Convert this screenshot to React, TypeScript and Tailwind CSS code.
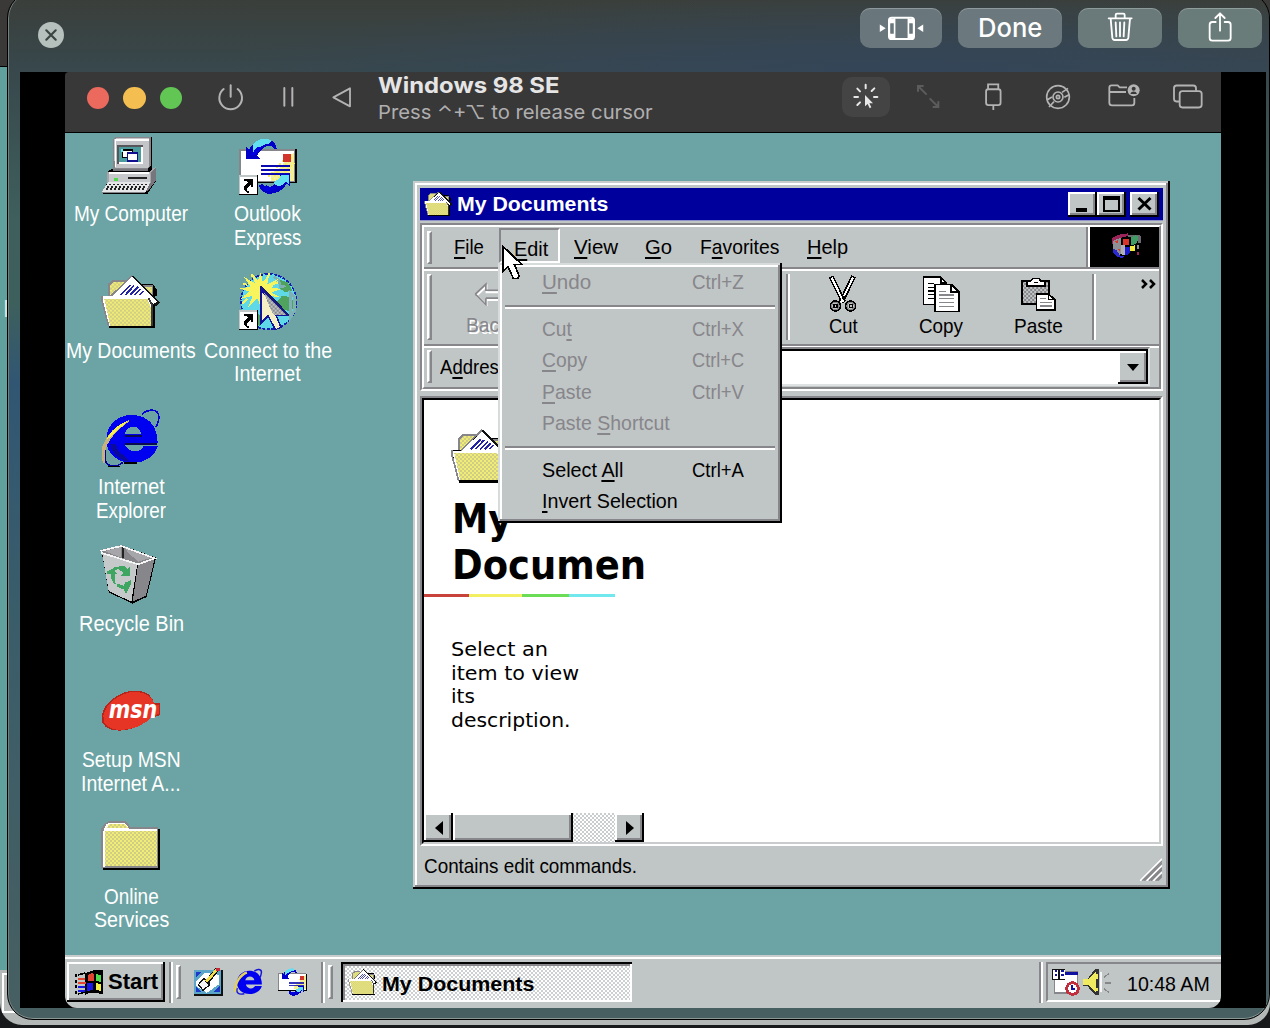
import { ReactNode, useLayoutEffect, useRef, useState } from "react";

/* A run of text condensed or stretched horizontally to a given width. */
function Fit({ w, children }: { w: number; children: ReactNode }) {
  const ref = useRef<HTMLSpanElement>(null);
  const [scale, setScale] = useState(1);
  useLayoutEffect(() => {
    if (ref.current) setScale(w / ref.current.offsetWidth);
  }, [w]);
  return (
    <span className="inline-block text-left" style={{ width: w }}>
      <span ref={ref} className="inline-block origin-left whitespace-nowrap" style={{ transform: `scaleX(${scale})` }}>
        {children}
      </span>
    </span>
  );
}

function U({ children }: { children: ReactNode }) {
  return <span className="underline decoration-2 underline-offset-[3px] [text-decoration-skip-ink:none]">{children}</span>;
}

function Art({ box, className, children }: { box: string; className?: string; children: ReactNode }) {
  return (
    <svg viewBox={box} className={className} shapeRendering="crispEdges" fill="none">
      {children}
    </svg>
  );
}

function Patterns() {
  return (
    <svg className="absolute h-0 w-0">
      <defs>
        <pattern id="yellow" width="12" height="12" patternUnits="userSpaceOnUse">
          <rect width="12" height="12" fill="#f0ec74" />
          <rect width="6" height="6" fill="#cfcd86" />
          <rect x="6" y="6" width="6" height="6" fill="#cfcd86" />
        </pattern>
        <pattern id="grey" width="12" height="12" patternUnits="userSpaceOnUse">
          <rect width="12" height="12" fill="#c0c5c5" />
          <rect width="6" height="6" fill="#87868b" />
          <rect x="6" y="6" width="6" height="6" fill="#87868b" />
        </pattern>
      </defs>
    </svg>
  );
}

/* ---------- desktop icons ---------- */

const ComputerIcon = () => (
  <Art box="120 17 186 186" className="h-[62px] w-[62px]">
    <path d="M158 28l8-8h108l3 6v90l12-8v42l-26 40H130v-6l12-28v-32l18-10z" fill="#000" />
    <path d="M158 28l8-8h106v88l-8 8H158z" fill="#87868b" />
    <path d="M162 28l6-4h98v84l-4 5h-98z" fill="#c4c5c9" />
    <path d="M164 26h102v5h-97v80h-5z" fill="#fff" />
    <path d="M172 43h77v58h-77z" fill="#57565b" />
    <path d="M178 49h70v51h-70z" fill="#fff" />
    <path d="M178 49h65v46h-65z" fill="#4c9c9d" />
    <path d="M186 56h34v26h-34z" fill="#000" /><path d="M190 61h26v18h-26z" fill="#fff" />
    <path d="M200 66h34v28h-34z" fill="#10108e" /><path d="M204 72h26v18h-26z" fill="#fff" />
    <path d="M182 56h6v10h-6z" fill="#61e6ed" />
    <path d="M142 126h124l22-18v40l-18 12H142z" fill="#a5a5aa" />
    <path d="M146 126h124v34H146z" fill="#c8c9cc" />
    <path d="M148 125h120v5H148z" fill="#fff" />
    <path d="M160 117h104v6h-104z" fill="#77767c" />
    <path d="M204 140h56v6h-56z" fill="#222" /><path d="M162 142h12v10h-12z" fill="#4fdc4b" />
    <path d="M272 126l16-14v38l-26 34-6-4 16-24z" fill="#77767c" />
    <path d="M144 156h126l-14 30H125z" fill="#e6e6e8" />
    <path d="M146 162h116M141 169h116M137 176h114" stroke="#222" strokeWidth="5" strokeDasharray="6 6" />
    <path d="M126 184h130v5H126z" fill="#87868b" />
  </Art>
);

const Shortcut = ({ y }: { y: number }) => (
  <g transform={`translate(534 ${y})`}>
    <path d="M0 0h59v59H0z" fill="#000" /><path d="M0 0h56v56H0z" fill="#c0c5c5" /><path d="M4 5h50v50H4z" fill="#fff" />
    <path d="M16 10h27v26h-7v-7l-10 9v8h6v6h-8l-8-8V34l12-14-12-4z" fill="#000" />
  </g>
);

const Envelope = () => (
  <>
    <path d="M536 56h172v102H536" fill="#000" />
    <path d="M534 54h170v100H534z" fill="#87868b" />
    <path d="M540 60h160v92H540z" fill="#fff" />
    <path d="M630 150v-20l30-20 20-30 20-14v84z" fill="#f4ee9b" />
    <path d="M632 146l66-70M646 150l54-54M624 138l50-56" stroke="#f7f05a" strokeWidth="6" strokeDasharray="6 6" />
    <path d="M668 70h24v24h-24z" fill="#d3342c" />
    <path d="M600 106h88M600 117h88M600 129h88" stroke="#0a0ab0" strokeWidth="5" />
    <path d="M555 46l11 10c8-18 26-32 54-30 18 2 26 14 28 28h-8c-6-10-16-12-26-6-14 8-20 18-24 26l10 12h-45z" fill="#0000c8" />
    <path d="M578 42c8-12 22-20 44-18l10 6-6 8c-20 2-30 14-36 26h-14z" fill="#62dff0" />
    <path d="M592 48l-22 24h14l20-22z" fill="#0000e0" />
    <path d="M654 130h34v36l-10-8c-8 18-28 32-54 32-14-2-24-12-30-24l10-6c10 10 20 12 32 6l24-26z" fill="#0000c8" />
    <path d="M660 134h24v26l-8-6-18 14-14-6-6-6 20-14z" fill="#62dff0" />
    <path d="M604 172l14 10 20-4 10-10-16 2-14-6z" fill="#0000e0" />
  </>
);

const OutlookIcon = () => (
  <Art box="529 16 186 186" className="h-[62px] w-[62px]">
    <Envelope />
    <Shortcut y={134} />
  </Art>
);

const OpenFolder = () => (
  <>
    <path d="M150 498v-34l16-14h30l12 12h70l12 18v20h-6v96H148v-6l-22-84v-8z" fill="#000" />
    <path d="M145 498v-36l14-12h36l16 16h68v34z" fill="#87868b" />
    <path d="M150 498v-32l12-10h30l14 16h70v28z" fill="url(#yellow)" />
    <path d="M152 500l64-62 6 2 78 78-12 12-14-10z" fill="#111" />
    <path d="M156 500l60-58 74 74-10 8-14-20z" fill="#fff" />
    <path d="M152 500l64-62" stroke="#87868b" strokeWidth="5" />
    <path d="M182 496l30-30M196 496l26-28M210 496l24-24M224 496l18-18M238 496l12-12" stroke="#2424a4" strokeWidth="5" />
    <path d="M126 500h138l12 14v70l6 6H146z" fill="#fff" />
    <path d="M133 508h129l10 24 4 58H151z" fill="url(#yellow)" />
    <path d="M126 498v16l20 76" stroke="#87868b" strokeWidth="5" />
    <path d="M266 506l10 20v62" stroke="#3a3a3a" strokeWidth="5" />
    <path d="M146 592h140" stroke="#000" strokeWidth="6" />
  </>
);

const DocumentsIcon = () => (
  <Art box="120 427 186 186" className="h-[62px] w-[62px]">
    <OpenFolder />
  </Art>
);

const ConnectIcon = () => (
  <Art box="529 427 186 186" className="h-[62px] w-[62px]">
    <circle cx="624" cy="516" r="83" fill="#5fd9e8" stroke="#1420b4" strokeWidth="5" strokeDasharray="10 4" />
    <path d="M655 450l26 8 14 24-20 6-16-10zM664 498l26 4 14 26-16 18-26-10-12-20zM572 556l18-8 14 20-8 22z" fill="#4fa35e" />
    <path d="M690 490l12 12v40l-12 20zM640 440l14 12 6 20 14-4" stroke="#7fb0b3" strokeWidth="8" />
    <path d="M600 428l6 28 20-22-6 30 32-16-18 26 28 4-30 10 28 16-34-6 8 24-26-18-6 34-12-32-28 28 14-36-36 10 26-22-30-10 34-4-20-30 32 18-8-30 18 24z" fill="#f8f45d" />
    <path d="M572 432l4 10M626 430l-4 12M548 462l12 4M552 500l12-6M545 522l14-14M652 458l-14 6" stroke="#f8f45d" strokeWidth="6" />
    <path d="M598 470v118l24-26 20 40 22-8-14-34h38z" fill="#14149a" />
    <path d="M604 490v84l18-20 24 44 12-6-18-44h26z" fill="#f4efc4" />
    <path d="M610 490l66 66h-36l-8-12z" fill="url(#grey)" />
    <path d="M600 470l86 88" stroke="#191970" strokeWidth="5" />
    <Shortcut y={542} />
  </Art>
);

const IeIcon = () => (
  <Art box="120 56 186 186" className="h-[62px] w-[62px]">
    <path d="M246 72c20-18 48-16 50 4 2 14-4 26-8 34" stroke="#0000d4" strokeWidth="5" />
    <path d="M136 180c-4 24 0 44 20 48 16 0 24-4 32-12" stroke="#0000a0" strokeWidth="5" />
    <path d="M144 226h36v5h-36z" fill="#000" />
    <path d="M215 74c50 0 78 34 78 84H194c2 24 44 36 56 10h43c-8 32-42 50-76 50-44 0-78-28-78-70 0-44 34-74 76-74zM194 132h50c-4-32-46-30-50 0z" fill="#0000f0" fillRule="evenodd" />
    <path d="M194 136h52M194 160h98" stroke="#0b0b52" strokeWidth="5" />
    <path d="M150 160c2 26 26 50 60 56l-18-22c-14-4-22-20-24-34z" fill="#0a0a9c" />
    <path d="M192 218h40" stroke="#000" strokeWidth="5" />
    <path d="M206 90c-40 14-66 44-78 76-6 22-4 38 2 52l6-2c-4-24 0-46 12-64 14-22 36-42 58-58z" fill="#c6b27a" />
    <path d="M206 90c-24 8-52 28-66 56l10-4c14-20 36-32 56-52z" fill="#f6ef4e" />
  </Art>
);

const RecycleIcon = () => (
  <Art box="120 466 186 186" className="h-[62px] w-[62px]">
    <path d="M124 480l60-14 104 38-28 118-42 20-72-34z" fill="#000" />
    <path d="M124 480l60-14 102 38-50 20-108-34z" fill="#87868b" />
    <path d="M134 484l50-12v32z" fill="#a5a5aa" /><path d="M194 474l80 30-40 12-30-28z" fill="#a5a5aa" />
    <path d="M188 470v34" stroke="#222" strokeWidth="5" />
    <path d="M126 488l106 36-18 112-68-32z" fill="#c5c9ca" />
    <path d="M234 524l50-18-26 112-40 18z" fill="#87868b" />
    <path d="M124 483l60-14 100 37-50 18-108-34z" stroke="#f5f5f5" strokeWidth="5" />
    <path d="M158 534l34-6 10 10 8-6v26h-28l8-8-14-12-14 4zM140 546l20-10 12 18h-8l2 24 4 8c-12-6-18-16-18-32h-12zM212 572v14l-14 26-6-12-20-8-2-10 22 6 4-10z" fill="#3fa662" />
  </Art>
);

const MsnIcon = () => (
  <Art box="120 36 186 186" className="h-[62px] w-[62px]">
    <path d="M290 110c-12 36-62 72-112 72-36 0-56-16-53-44 4-40 56-76 98-76 38 0 52 14 60 38h16v36l-14 4z" fill="#b5251c" />
    <path d="M284 104h12v28l-20 8c-20 24-58 40-94 40-34 0-54-14-52-42 6-38 54-72 92-72 32 0 54 10 62 38z" fill="#e73525" />
    <text x="146" y="145" fontFamily="DejaVu Sans" fontSize="74" fontWeight="bold" fontStyle="italic" fill="#fff" textLength="146" lengthAdjust="spacingAndGlyphs">msn</text>
  </Art>
);

const FolderIcon = () => (
  <Art box="120 444 186 186" className="h-[62px] w-[62px]">
    <path d="M129 478h170v121H129z" fill="#000" />
    <path d="M124 474l12-14 10-7h52l14 19h82v122H124z" fill="#87868b" />
    <path d="M132 476l8-14 10-4h44l14 18h84v8H132z" fill="#fff" />
    <path d="M140 474l8-12h46l10 12zM136 484h154v104H136z" fill="url(#yellow)" />
    <path d="M132 484v106" stroke="#fff" strokeWidth="6" />
  </Art>
);

type Line = [string, number];

function DesktopIcon({ icon, lines }: { icon: ReactNode; lines: Line[] }) {
  return (
    <div className="flex flex-col items-center text-[22px] leading-[23.5px] text-white">
      <div className="h-[66.5px]">{icon}</div>
      {lines.map(([t, w]) => (
        <div key={t} className="h-[23.5px]"><Fit w={w}>{t}</Fit></div>
      ))}
    </div>
  );
}

/* ---------- window ---------- */

const raised = "bg-[#c0c5c5] shadow-[inset_-2px_-2px_0_#000,inset_2px_2px_0_#fff,inset_-4px_-4px_0_#87868b]";

function Grip({ className }: { className: string }) {
  return <div className={`w-[5px] shrink-0 border-2 border-l-white border-t-white border-r-[#87868b] border-b-[#87868b] ${className}`} />;
}

function Groove({ className }: { className: string }) {
  return <div className={`w-[4px] shrink-0 border-l-2 border-r-2 border-l-[#87868b] border-r-white ${className}`} />;
}

function TitleBar() {
  return (
    <div className="flex h-[33px] items-center bg-[#00009c] pl-[4px] pr-[4px] shadow-[inset_0_-1px_0_#8f92c8]">
      <Art box="120 431 186 186" className="h-[30px] w-[29px]"><OpenFolder /></Art>
      <div className="ml-[4px] h-[34px] text-[21px] leading-[32px] font-bold text-white"><Fit w={151}>My Documents</Fit></div>
      <div className="ml-auto flex items-start">
        <div className={`h-[25px] w-[29px] ${raised}`}><div className="ml-[8px] mt-[16px] h-[4px] w-[11px] bg-black" /></div>
        <div className={`h-[25px] w-[29px] ${raised}`}><div className="ml-[6px] mt-[4px] h-[16px] w-[17px] border-2 border-t-4 border-black" /></div>
        <div className={`ml-[4px] h-[25px] w-[29px] ${raised}`}>
          <svg viewBox="0 0 29 25" className="h-[25px] w-[29px]" fill="none"><path d="M8.500 6l12 11.500M20.500 6l-12 11.500" stroke="#000" strokeWidth="3" /></svg>
        </div>
      </div>
    </div>
  );
}

const FlagLogo = () => (
  <svg viewBox="995 175 90 75" className="h-[25px] w-[30px]" shapeRendering="crispEdges">
    <path d="M998 190l20-10 28-4v8l-22 6-18 22-8-4z" fill="#9c2358" />
    <path d="M1002 198l24-10v50l-14 6-10-18z" fill="#8f8f96" /><path d="M1006 200l12-4-4 10zM1014 222h8v8z" fill="#d93a30" />
    <path d="M1000 222l12 4 10 18 14 2-6 4-18-4-12-12z" fill="#2a2ad0" />
    <path d="M1044 180l34 0 6 6v18l-6 4-4-20-26 0z" fill="#6a6a70" />
    <path d="M1030 192h20v20h-20z" fill="#d8362c" /><path d="M1056 188l12-6 8 4v12l-8 10-14 4z" fill="#3f9a63" />
    <path d="M1036 216h16v18l-10 8-8-4z" fill="#1a1ad0" /><path d="M1052 214l16-2v18h-16z" fill="#f2ea3c" />
    <path d="M1024 212h14v30h-8l-6-8z" fill="#b0b0b6" /><path d="M1072 212h6v12h-6z" fill="#8f8f96" /><path d="M1072 232h6v10h-6z" fill="#9c2358" />
  </svg>
);

function MenuBar() {
  return (
    <div className="flex h-[40px] items-start text-[21px] leading-[39px]">
      <Grip className="ml-[3px] mt-[4px] h-[33px]" />
      <div className="ml-[22px]"><Fit w={30}><U>F</U>ile</Fit></div>
      <div className="ml-[15px] mt-[1px] h-[35px] w-[61px] border-2 border-l-[#87868b] border-t-[#87868b] border-r-white border-b-white pl-[13px] leading-[37px]"><Fit w={34}><U>E</U>dit</Fit></div>
      <div className="ml-[14px]"><Fit w={44}><U>V</U>iew</Fit></div>
      <div className="ml-[27px]"><Fit w={27}><U>G</U>o</Fit></div>
      <div className="ml-[28px]"><Fit w={79}>F<U>a</U>vorites</Fit></div>
      <div className="ml-[28px]"><Fit w={41}><U>H</U>elp</Fit></div>
      <div className="ml-auto h-[40px] border-l-2 border-[#87868b]">
        <div className="h-[40px] border-l-2 border-white">
          <div className="flex h-[40px] w-[69px] items-center justify-center bg-black pl-[3px] pb-[3px]"><FlagLogo /></div>
        </div>
      </div>
    </div>
  );
}

const CutIcon = () => (
  <Art box="145 300 90 114" className="h-[38px] w-[30px]">
    <path d="M154 304l38 78M222 304l-38 78" stroke="#000" strokeWidth="15" />
    <path d="M156 308l36 74M220 308l-36 74" stroke="#fff" strokeWidth="6" />
    <path d="M186 362h9v10h-9z" fill="#000" />
    <circle cx="167" cy="393" r="15" stroke="#000" strokeWidth="5" /><circle cx="213" cy="393" r="15" stroke="#000" strokeWidth="5" />
    <circle cx="167" cy="393" r="11" stroke="#87868b" strokeWidth="4" /><circle cx="213" cy="393" r="11" stroke="#87868b" strokeWidth="4" />
    <path d="M163 389h9v9h-9zM209 389h9v9h-9z" stroke="#000" strokeWidth="4" />
  </Art>
);

const CopyIcon = () => (
  <Art box="425 300 117 114" className="h-[38px] w-[39px]">
    <path d="M429 306h52l16 16v66h-68z" fill="#fff" stroke="#000" strokeWidth="5" />
    <path d="M442 326h20M442 337h20M442 348h20M442 359h20M442 370h20" stroke="#000" strokeWidth="4" />
    <path d="M481 306v18h16" stroke="#000" strokeWidth="5" />
    <path d="M463 328h50l22 22v59h-72z" fill="#fff" stroke="#000" strokeWidth="5" />
    <path d="M512 328v22h22" stroke="#000" strokeWidth="5" />
    <path d="M476 349h22M476 360h46M476 371h46M476 383h46M476 394h46" stroke="#87868b" strokeWidth="4" />
  </Art>
);

const PasteIcon = () => (
  <Art box="720 300 110 114" className="h-[38px] w-[37px]">
    <path d="M726 318h81v68h-81z" fill="url(#grey)" stroke="#000" strokeWidth="5" />
    <path d="M740 318h12l6-8h18l6 8h12v14h-54z" fill="#fff" stroke="#000" strokeWidth="5" />
    <path d="M762 322h10" stroke="#000" strokeWidth="5" />
    <path d="M769 357h36l19 17v30h-55z" fill="#fff" stroke="#000" strokeWidth="5" />
    <path d="M804 357v17h19" stroke="#000" strokeWidth="4" />
    <path d="M778 370h18M778 382h38M778 393h38" stroke="#87868b" strokeWidth="4" />
  </Art>
);

function ToolButton({ icon, label, w, className }: { icon: ReactNode; label: string; w: number; className: string }) {
  return (
    <div className={`flex w-[98px] flex-col items-center pt-[4px] ${className}`}>
      {icon}
      <div className="mt-[1px] h-[24px] leading-[24px]"><Fit w={w}>{label}</Fit></div>
    </div>
  );
}

function ToolBar() {
  return (
    <div className="flex h-[73px] items-start text-[21px]">
      <Grip className="ml-[3px] mt-[3px] h-[66px]" />
      <div className="ml-[34px] w-[60px] pt-[10px] text-[#87868b]">
        <svg viewBox="205 320 100 80" className="ml-[7px] h-[27px] w-[33px]" fill="none">
          <path d="M216 363l30-28v18h60M246 395v-18h60M216 363l32 32" stroke="#fff" strokeWidth="6" />
          <path d="M212 359l32-30v18h60M244 371h60M244 371v20l-32-32" stroke="#87868b" strokeWidth="5" />
        </svg>
        <div className="mt-[5px] h-[24px] leading-[24px] [text-shadow:2px_2px_0_#fff]"><Fit w={43}>Back</Fit></div>
      </div>
      <Groove className="ml-[260px] mt-[3px] h-[66px]" />
      <ToolButton className="ml-[4px]" icon={<CutIcon />} label="Cut" w={29} />
      <ToolButton className="" icon={<CopyIcon />} label="Copy" w={44} />
      <ToolButton className="-ml-[1px]" icon={<PasteIcon />} label="Paste" w={49} />
      <Groove className="ml-[5px] mt-[3px] h-[66px]" />
      <svg viewBox="0 0 16 10" className="ml-[45px] mt-[8px] h-[10px] w-[16px]" fill="none"><path d="M1 1l4 4-4 4M9 1l4 4-4 4" stroke="#000" strokeWidth="2.500" /></svg>
    </div>
  );
}

function AddressBar() {
  return (
    <div className="flex h-[39px] items-start text-[21px] leading-[38px]">
      <Grip className="ml-[3px] mt-[2px] h-[33px]" />
      <div className="ml-[8px]"><Fit w={68}>A<U>d</U>dress</Fit></div>
      <div className="ml-[7px] mt-[-1px] h-[39px] flex-1 border-2 border-l-[#87868b] border-t-[#87868b] border-r-[#dfe2e2] border-b-[#dfe2e2]">
        <div className="flex h-full justify-end border-l-2 border-t-2 border-black bg-white">
          <div className={`flex h-[33px] w-[30px] items-center justify-center ${raised}`}>
            <div className="border-x-[6px] border-t-[7px] border-x-transparent border-t-black" />
          </div>
        </div>
      </div>
      <div className="w-[9px]" />
    </div>
  );
}

const Etch = () => <div className="h-[4px] border-t-2 border-b-2 border-t-[#87868b] border-b-white" />;

function ScrollBar() {
  return (
    <div className="flex h-[29px] w-[220px] bg-[repeating-conic-gradient(#fff_0_25%,#c9cdcd_0_50%)] bg-[length:4px_4px]">
      <div className={`flex w-[29px] items-center justify-center ${raised}`}><div className="border-y-[7px] border-r-[8px] border-y-transparent border-r-black" /></div>
      <div className={`w-[120px] ${raised}`} />
      <div className={`ml-auto flex w-[29px] items-center justify-center ${raised}`}><div className="border-y-[7px] border-l-[8px] border-y-transparent border-l-black" /></div>
    </div>
  );
}

function ContentPane() {
  return (
    <div className="flex h-full flex-col overflow-hidden bg-white font-['DejaVu_Sans']">
      <Art box="120 429 186 186" className="ml-[26px] mt-[27px] h-[62px] w-[62px]"><OpenFolder /></Art>
      <div className="ml-[28px] mt-[7px] w-[193px] text-[40px] leading-[46px] font-bold">
        <div className="h-[46px]"><Fit w={60}>My</Fit></div>
        <div className="h-[46px]"><Fit w={194}>Documen</Fit></div>
      </div>
      <div className="mt-[6px] flex h-[3px]">
        <div className="w-[45px] bg-[#c7433c]" /><div className="w-[53px] bg-[#f2ef62]" /><div className="w-[47px] bg-[#6bdc55]" /><div className="w-[46px] bg-[#70e8ee]" />
      </div>
      <div className="ml-[27px] mt-[41px] text-[20px] leading-[23.5px]">
        <div><Fit w={97}>Select an</Fit></div>
        <div><Fit w={128}>item to view</Fit></div>
        <div><Fit w={24}>its</Fit></div>
        <div><Fit w={120}>description.</Fit></div>
      </div>
      <div className="mt-auto"><ScrollBar /></div>
    </div>
  );
}

function MenuItem({ label, w, keys, on }: { label: ReactNode; w: number; keys?: string; on?: boolean }) {
  return (
    <div className={`flex h-[31.2px] pl-[40px] leading-[30px] ${on ? "text-black" : "text-[#87868b]"}`}>
      <div className="w-[150px]"><Fit w={w}>{label}</Fit></div>
      {keys && <Fit w={52}>{keys}</Fit>}
    </div>
  );
}

const MenuRule = () => <div className="mx-[3px] h-[16px] pt-[7px]"><Etch /></div>;

function EditMenu() {
  return (
    <div className="absolute left-[85px] top-[82px] h-[260px] w-[284px] bg-[#c0c5c5] p-[4px] text-[21px] shadow-[inset_-2px_-2px_0_#000,inset_2px_2px_0_#d8dbdb,inset_-4px_-4px_0_#87868b,inset_4px_4px_0_#fff]">
      <MenuItem label={<><U>U</U>ndo</>} w={49} keys="Ctrl+Z" />
      <MenuRule />
      <MenuItem label={<>Cu<U>t</U></>} w={30} keys="Ctrl+X" />
      <MenuItem label={<><U>C</U>opy</>} w={45} keys="Ctrl+C" />
      <MenuItem label={<><U>P</U>aste</>} w={50} keys="Ctrl+V" />
      <MenuItem label={<>Paste <U>S</U>hortcut</>} w={128} />
      <MenuRule />
      <MenuItem on label={<>Select <U>A</U>ll</>} w={81} keys="Ctrl+A" />
      <MenuItem on label={<><U>I</U>nvert Selection</>} w={136} />
    </div>
  );
}

function ExplorerWindow() {
  return (
    <div className="absolute left-[348px] top-[48px] flex h-[708px] w-[757px] flex-col bg-[#c0c5c5] px-[7px] pt-[7px] text-black shadow-[inset_-2px_-2px_0_#000,inset_2px_2px_0_#c8cccc,inset_-4px_-4px_0_#87868b,inset_4px_4px_0_#fff]">
      <TitleBar />
      <div className="mt-[2px] border-2 border-l-[#87868b] border-t-[#87868b] border-r-white border-b-white">
        <div className="border-2 border-l-white border-t-white border-r-[#87868b] border-b-[#87868b]">
          <MenuBar />
          <Etch />
          <ToolBar />
          <Etch />
          <AddressBar />
        </div>
      </div>
      <div className="mt-[5px] h-[450px] border-2 border-l-[#87868b] border-t-[#87868b] border-r-white border-b-white">
        <div className="h-full border-2 border-l-black border-t-black border-r-[#c8cccc] border-b-[#c8cccc]">
          <ContentPane />
        </div>
      </div>
      <div className="flex h-[37px] justify-between pl-[4px] text-[21px] leading-[39px]">
        <Fit w={213}>Contains edit commands.</Fit>
        <svg viewBox="418 115 66 68" className="mr-[1px] mt-[12px] h-[23px] w-[22px]">
          <path d="M418 183l66-66M438 183l46-46M458 183l26-26" stroke="#fff" strokeWidth="5" />
          <path d="M425 183l59-59M431 183l53-53M445 183l39-39M451 183l33-33M465 183l19-19M471 183l13-13" stroke="#87868b" strokeWidth="4" />
        </svg>
      </div>
      <EditMenu />
      <svg viewBox="288 207 66 108" className="absolute left-[88px] top-[63px] h-[36px] w-[22px]" shapeRendering="crispEdges">
        <path d="M293 213v76l16-14 16 35h14l3-8-14-34h22z" fill="#fff" stroke="#000" strokeWidth="5" />
      </svg>
    </div>
  );
}

/* ---------- taskbar ---------- */

const IeSmall = () => (
  <svg viewBox="120 50 186 186" className="h-[30px] w-[30px]" fill="none">
    <path d="M246 76c20-18 46-12 44 8-2 14-4 22-8 30M140 180c-8 28 4 44 44 36" stroke="#1515d8" strokeWidth="9" />
    <path d="M215 74c50 0 78 34 78 84H194c2 24 44 36 56 10h43c-8 32-42 50-76 50-44 0-78-28-78-70 0-44 34-74 76-74zM190 132h56c-4-32-52-30-56 0z" fill="#0000f0" fillRule="evenodd" />
    <path d="M200 84c-34 10-76 60-74 120" stroke="#e2d25a" strokeWidth="15" />
  </svg>
);

function TaskBar() {
  return (
    <div className="flex h-[53px] items-start border-t-2 border-[#c8cccc] bg-[#c0c5c5] font-bold text-black shadow-[inset_0_2px_0_#fff]">
      <div className={`ml-[2px] mt-[5px] flex h-[40px] w-[98px] items-center pl-[7px] ${raised}`}>
        <Art box="220 86 90 82" className="h-[27px] w-[30px]">
          <path d="M256 98l22-8h30v74l-22-6h-18l-16 8v-60z" fill="#000" />
          <path d="M263 103l14-5 4 5v20h-20z" fill="#e2442f" /><path d="M286 100l16 6v20l-16-5z" fill="#4edb4c" />
          <path d="M260 130l18-3v22l-20 5z" fill="#1717e8" /><path d="M286 128l16 5v20l-16-4z" fill="#f4ee49" />
          <path d="M225 102v60" stroke="#000" strokeWidth="6" strokeDasharray="9 8" />
          <path d="M232 104l22-6M232 162l22-6" stroke="#000" strokeWidth="5" />
          <path d="M232 116h22M232 128h24" stroke="#e2442f" strokeWidth="7" /><path d="M232 141h22M232 152h20" stroke="#1717e8" strokeWidth="7" />
        </Art>
        <div className="ml-[4px] text-[22px] leading-[40px]"><Fit w={50}>Start</Fit></div>
      </div>
      <Groove className="ml-[4px] mt-[5px] h-[41px]" />
      <Grip className="ml-[3px] mt-[8px] h-[34px]" />
      <Art box="580 82 93 92" className="ml-[12px] mt-[9px] h-[31px] w-[31px]">
        <path d="M582 94h88v76h-88z" fill="#111" /><path d="M582 94h82v70h-82z" fill="#5ba6c8" />
        <path d="M588 100h18l-18 18zM642 160h18v-18zM588 142v16h16z" fill="#1d39c8" />
        <path d="M588 128l28-26 42 6v28l-36 26-32-20z" fill="#fff" />
        <path d="M596 138l16-18 16 6v14l-18 14z" fill="#f6f6f6" stroke="#111" strokeWidth="4" />
        <path d="M620 132l34-42" stroke="#111" strokeWidth="13" /><path d="M620 128l32-36" stroke="#f2de47" strokeWidth="8" /><path d="M648 86h12v10h-12z" fill="#c7283a" />
      </Art>
      <div className="ml-[10px] mt-[10px]"><IeSmall /></div>
      <Art box="530 15 182 182" className="ml-[13px] mt-[10px] h-[30px] w-[31px]"><Envelope /></Art>
      <Groove className="ml-[13px] mt-[5px] h-[41px]" />
      <Grip className="ml-[3px] mt-[8px] h-[34px]" />
      <div className="ml-[8px] mt-[5px] flex h-[40px] w-[291px] items-center bg-[repeating-conic-gradient(#fff_0_25%,#cdd0d0_0_50%)] bg-[length:4px_4px] pl-[7px] shadow-[inset_2px_2px_0_#000,inset_-2px_-2px_0_#fff,inset_4px_4px_0_#87868b]">
        <Art box="120 423 186 186" className="h-[30px] w-[30px]"><OpenFolder /></Art>
        <div className="ml-[4px] mt-[3px] text-[21px] leading-[38px]"><Fit w={152}>My Documents</Fit></div>
      </div>
      <Groove className="ml-auto mt-[5px] h-[41px]" />
      <div className="ml-[3px] mt-[5px] flex h-[40px] w-[175px] items-center border-2 border-r-0 border-l-[#87868b] border-t-[#87868b] border-b-white pl-[3px] text-[21px] font-normal">
        <Art box="153 440 90 92" className="h-[30px] w-[30px]">
          <path d="M160 452h76v70h-76z" fill="#87868b" /><path d="M164 462h68v54h-68z" fill="#fff" /><path d="M196 454h40v9h-40z" fill="#1212a0" />
          <path d="M156 446h40v34h-40z" fill="#111" /><path d="M158 448h16v28h-16zM180 448h14v28h-14z" fill="#fff" />
          <path d="M163 452h8M163 464h8M183 452h8M183 464h8" stroke="#1212a0" strokeWidth="5" />
          <circle cx="218" cy="506" r="18" fill="#fff" stroke="#c12f3e" strokeWidth="9" /><path d="M217 495v12h10" stroke="#1212a0" strokeWidth="5" />
        </Art>
        <Art box="246 440 92 92" className="ml-[1px] h-[30px] w-[30px]">
          <path d="M286 446h12v80h-12l-24-28h-12v-22h14z" fill="#333" /><path d="M250 478h14l24-24v64l-24-24h-14z" fill="#f0ea60" />
          <path d="M300 456h6v62h-6z" fill="#f5f5f5" /><path d="M290 462h6v14h-6zM290 504h6v10h-6z" fill="#f0ea60" />
          <path d="M314 472l14-12M316 489h20M314 506l14 12" stroke="#87868b" strokeWidth="4" />
        </Art>
        <div className="ml-[15px] mt-[3px] leading-[38px]"><Fit w={83}>10:48 AM</Fit></div>
      </div>
    </div>
  );
}

/* ---------- virtual machine window ---------- */

function MacHeader() {
  return (
    <div className="flex h-[61px] shrink-0 items-start rounded-tl-[4px] border-b border-black bg-[#393839] font-['Inter']">
      <div className="ml-[21.500px] mt-[14.500px] flex gap-[14px]">
        <div className="h-[22.500px] w-[22.500px] rounded-full bg-[#ec695e]" />
        <div className="h-[22.500px] w-[22.500px] rounded-full bg-[#f4be50]" />
        <div className="h-[22.500px] w-[22.500px] rounded-full bg-[#62c655]" />
      </div>
      <svg viewBox="650 245 84 90" className="ml-[34px] mt-[10px] h-[30px] w-[28px]" fill="none" stroke="#b4b3b4" strokeWidth="6" strokeLinecap="round">
        <path d="M694 255v34M673 266a34 34 0 1 0 42 0" />
      </svg>
      <svg viewBox="845 245 45 90" className="ml-[37px] mt-[10px] h-[30px] w-[15px]" stroke="#b4b3b4" strokeWidth="6" strokeLinecap="round"><path d="M855 263v53M879 263v53" /></svg>
      <svg viewBox="995 245 66 90" className="ml-[35px] mt-[10px] h-[30px] w-[22px]" fill="none" stroke="#b4b3b4" strokeWidth="5.500" strokeLinejoin="round"><path d="M1002 291l50-27v54z" /></svg>
      <div className="ml-[25px] leading-[27px]">
        <div className="h-[27px] text-[22px] font-bold text-[#e6e5e6]"><Fit w={181}>Windows 98 SE</Fit></div>
        <div className="h-[27px] text-[19px] text-[#b0afb0]"><Fit w={275}>Press ⌃+⌥ to release cursor</Fit></div>
      </div>
      <div className="ml-auto mr-[17px] flex items-start pt-[5px] text-[#b4b3b4]">
        <div className="h-[40px] w-[48px] rounded-[10px] bg-[#454445] pl-[10px] pt-[5px]">
          <svg viewBox="96 246 84 84" className="h-[28px] w-[28px]" fill="none" stroke="#e8e7e8" strokeWidth="6" strokeLinecap="round">
            <path d="M137 254v11M103 291h11M162 291h10M112 266l8 8M163 265l-8 8M112 315l8-8" />
            <path d="M135 285v34l8-7 6 13 5-3-6-12h11z" fill="#e8e7e8" stroke="none" />
          </svg>
        </div>
        <svg viewBox="285 250 78 78" className="ml-[25px] mt-[6px] h-[26px] w-[26px]" fill="none" stroke="#5d5c5d" strokeWidth="6"><path d="M294 276v-17h17M294 259l26 26M355 305v17h-17M355 322l-26-26" /></svg>
        <svg viewBox="490 248 60 88" className="ml-[42px] mt-[5px] h-[29px] w-[20px]" fill="none" stroke="currentColor" strokeWidth="5.500"><path d="M505 270v-15h31v15M521 320v13" /><rect x="499" y="270" width="44" height="48" rx="7" /></svg>
        <svg viewBox="672 248 84 84" className="ml-[41px] mt-[6px] h-[28px] w-[28px]" fill="none" stroke="currentColor" strokeWidth="5"><circle cx="714" cy="290" r="34" /><circle cx="714" cy="290" r="15" /><circle cx="714" cy="290" r="5" /><path d="M726 276l18-12M733 291l14-8M702 304l-15 16M696 290l-15 9" /></svg>
        <svg viewBox="860 248 102 84" className="ml-[35px] mt-[5px] h-[28px] w-[34px]" fill="none" stroke="currentColor" strokeWidth="5.500"><path d="M920 264h-22l-6-6h-18q-7 0-7 7v45q0 8 8 8h60q7 0 7-8v-14M867 278h50" /><circle cx="940" cy="273" r="18" fill="currentColor" stroke="none" /><circle cx="940" cy="268" r="6" fill="#393839" stroke="none" /><path d="M930 284c3-10 17-10 20 0z" fill="#393839" stroke="none" /></svg>
        <svg viewBox="1055 250 96 80" className="ml-[31px] mt-[6px] h-[27px] w-[32px]" fill="none" stroke="currentColor" strokeWidth="5.500"><path d="M1078 305h-10q-7 0-7-8v-32q0-8 8-8h50q8 0 8 8v8" /><rect x="1078" y="274" width="66" height="49" rx="8" /></svg>
      </div>
    </div>
  );
}

function Desktop() {
  return (
    <div className="relative flex-1 bg-[#6ca4a5] pt-[2.500px]">
      <div className="grid auto-rows-[136.600px] grid-cols-[132px_141px]">
        <DesktopIcon icon={<ComputerIcon />} lines={[["My Computer", 114]]} />
        <DesktopIcon icon={<OutlookIcon />} lines={[["Outlook", 67], ["Express", 67]]} />
        <DesktopIcon icon={<DocumentsIcon />} lines={[["My Documents", 130]]} />
        <DesktopIcon icon={<ConnectIcon />} lines={[["Connect to the", 128], ["Internet", 67]]} />
        <DesktopIcon icon={<IeIcon />} lines={[["Internet", 67], ["Explorer", 70]]} />
        <div />
        <DesktopIcon icon={<RecycleIcon />} lines={[["Recycle Bin", 105]]} />
        <div />
        <DesktopIcon icon={<MsnIcon />} lines={[["Setup MSN", 99], ["Internet A...", 100]]} />
        <div />
        <DesktopIcon icon={<FolderIcon />} lines={[["Online", 55], ["Services", 75]]} />
      </div>
      <ExplorerWindow />
    </div>
  );
}

/* ---------- preview panel ---------- */

const pill = "flex h-[40px] items-center justify-center rounded-[10px] text-white shadow-[inset_0_1px_0_#ffffff40]";

function PreviewBar() {
  return (
    <div className="flex h-[72px] shrink-0 items-start bg-[radial-gradient(ellipse_55%_110%_at_72%_100%,#344559,transparent)] pl-[30px] pt-[8px]">
      <div className="mt-[14px] flex h-[26px] w-[26px] items-center justify-center rounded-full bg-[#b6c0bc]">
        <svg viewBox="0 0 26 26" className="h-[26px] w-[26px]"><path d="M8.300 8.300l9.400 9.400M17.700 8.300l-9.400 9.400" stroke="#3b4643" strokeWidth="2.200" strokeLinecap="round" /></svg>
      </div>
      <div className="ml-auto mr-[7px] flex gap-[16px]">
        <div className={`w-[82px] bg-[#69777c] ${pill}`}>
          <svg viewBox="176 44 134 76" className="h-[25px] w-[45px]" fill="none" stroke="#fff">
            <rect x="205" y="49" width="76" height="65" rx="8" strokeWidth="6" /><path d="M222 51v62M264 51v62" strokeWidth="5" /><path d="M206 56v50M280 56v50" strokeWidth="6" />
            <path d="M177 70l18 11-18 12zM309 70l-18 11 18 12z" fill="#fff" stroke="none" />
            <path d="M212 69v26M274 69v26" stroke="#69777c" strokeWidth="4" />
            <path d="M206 52h16v14h-16zM206 98h16v14h-16zM264 52h16v14h-16zM264 98h16v14h-16z" fill="#fff" stroke="none" />
          </svg>
        </div>
        <div className={`w-[104px] bg-[#6b797e] pb-[2px] font-['Inter'] text-[26px] font-medium ${pill}`}><Fit w={64}>Done</Fit></div>
        <div className={`w-[84px] bg-[#6a7a7a] ${pill}`}>
          <svg viewBox="862 34 78 90" className="-mt-[3px] h-[30px] w-[26px]" fill="none" stroke="#fff" strokeWidth="5.500" strokeLinecap="round" strokeLinejoin="round"><path d="M867 53h69M888 51v-8q0-4 4-4h19q4 0 4 4v8M873 54l5 57q1 7 7 7h34q6 0 7-7l5-57M888 65l2 42M901 65v42M914 65l-2 42" /></svg>
        </div>
        <div className={`w-[84px] bg-[#6a7c7a] ${pill}`}>
          <svg viewBox="1162 32 78 90" className="-mt-[3px] h-[30px] w-[26px]" fill="none" stroke="#fff" strokeWidth="5.500" strokeLinecap="round" strokeLinejoin="round"><path d="M1188 62h-10q-8 0-8 8v40q0 8 8 8h47q8 0 8-8V70q0-8-8-8h-10M1201 88V37M1187 50l14-14 14 14" /></svg>
        </div>
      </div>
    </div>
  );
}

export default function App() {
  return (
    <div className="relative h-[1028px] w-[1270px] overflow-hidden bg-[#17191b] font-['Liberation_Sans',sans-serif]">
      <Patterns />
      <div className="flex h-[1025px] flex-col overflow-hidden rounded-bl-[22px] rounded-br-[22px] bg-[#b4b8b6]">
        <div className="h-[67px] shrink-0 border-b border-black bg-[#3a3938]" />
        <div className="h-[903px] shrink-0 bg-[#60a09d] pl-[3px] pt-[224px] text-[24px] text-[#dfe6e2]">M</div>
        <div className="ml-[2px] mt-[3px] h-[40px] w-[60px] border-2 border-white" />
      </div>
      <div className="absolute -top-[8px] left-[7px] flex h-[1028px] w-[1263px] flex-col overflow-hidden rounded-[26px] border border-black bg-[linear-gradient(180deg,#3b3e39_0%,#38474b_7%,#3e5f5c_22%,#3e605c_30%,#315673_38%,#3a5d6a_60%,#475f61_100%)] pt-[7px] shadow-[inset_1px_0_0_#73807d,inset_0_-1px_0_#8b9896]">
        <PreviewBar />
        <div className="ml-[12px] flex h-[936px] w-[1246px] shrink-0 justify-center bg-black">
          <div className="flex w-[1156px] flex-col overflow-hidden rounded-b-[12px]">
            <MacHeader />
            <Desktop />
            <TaskBar />
          </div>
        </div>
      </div>
    </div>
  );
}
